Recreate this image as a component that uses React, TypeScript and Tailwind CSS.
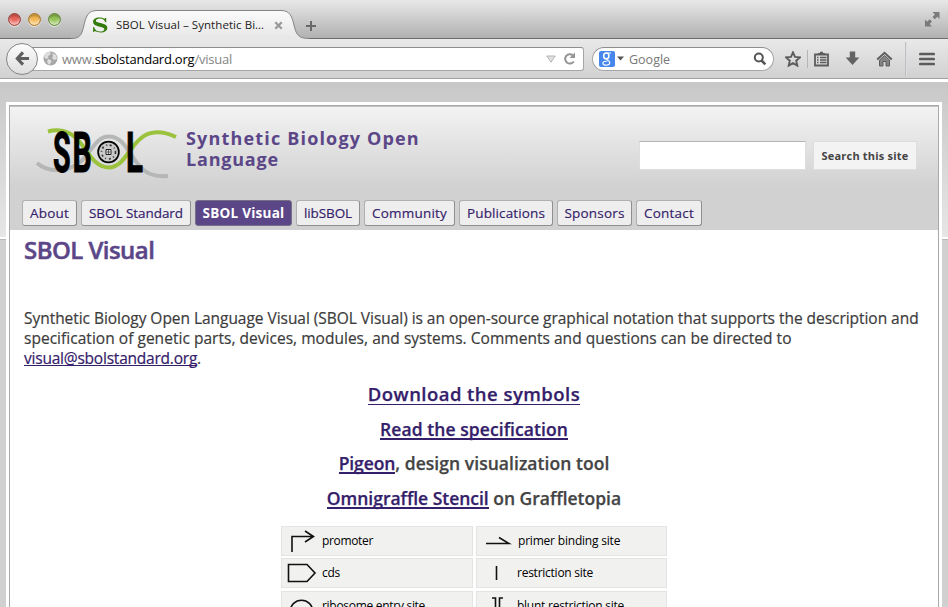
import type { ReactNode } from "react";

const nav = [
  { label: "About", cls: "w-[55px] tracking-[0.2px]" },
  { label: "SBOL Standard", cls: "w-[110px] tracking-[-0.05px]" },
  { label: "SBOL Visual", cls: "w-[97px] tracking-[0.26px]", active: true },
  { label: "libSBOL", cls: "w-[64px] tracking-[-0.1px]" },
  { label: "Community", cls: "w-[91px] tracking-[0.2px]" },
  { label: "Publications", cls: "w-[94px] tracking-[0.13px]" },
  { label: "Sponsors", cls: "w-[75px] tracking-[0.18px]" },
  { label: "Contact", cls: "w-[66px] tracking-[0.2px]" },
];

function Light({ className }: { className: string }) {
  return (
    <span className={`h-[13px] w-[13px] rounded-full border shadow-[inset_0_2px_2px_rgba(0,0,0,0.25),inset_0_-3px_3px_rgba(255,255,255,0.55),0_1px_0_rgba(255,255,255,0.6)] ${className}`} />
  );
}

function TabStrip() {
  return (
    <div className="relative flex h-[39px] items-start border-b border-[#6e6e6e] bg-linear-to-b from-[#e8e8e8] to-[#b1b1b1]">
      <div className="flex gap-[7px] pt-[13px] pl-[8px]">
        <Light className="border-[#99443f] bg-[#e85f57]" />
        <Light className="border-[#a8752c] bg-[#f3b64c]" />
        <Light className="border-[#67873f] bg-[#92c353]" />
      </div>
      <div className="relative ml-[10px] h-[39px] w-[238px]">
        <svg className="absolute inset-0" width="238" height="39" viewBox="0 0 238 39">
          <defs>
            <linearGradient id="tab" x1="0" y1="0" x2="0" y2="1">
              <stop offset="0" stopColor="#fbfbfb" />
              <stop offset="1" stopColor="#e7e7e7" />
            </linearGradient>
          </defs>
          <path d="M0 39V38.500C9 38.500 10.500 35 12.500 27C15 16 17 10.500 26 10.500H210C219 10.500 221 16 223.500 27C225.500 35 228 38.500 238 38.500V39Z" fill="url(#tab)" />
          <path d="M0 38.500C9 38.500 10.500 35 12.500 27C15 16 17 10.500 26 10.500H210C219 10.500 221 16 223.500 27C225.500 35 228 38.500 238 38.500" fill="none" stroke="#858585" />
        </svg>
        <div className="relative flex h-[39px] items-center pt-[11px] pl-[21px]">
          <svg width="16" height="16" viewBox="0 0 17 18">
            <path d="M15.500 1V6H14.500C13.700 3 11.500 1.600 8.500 1.600C5.500 1.600 3.800 2.600 3.800 4.300C3.800 7.500 16.800 6.200 16.800 12C16.800 15.500 13.500 17.300 9.500 17.300C6.800 17.300 4.500 16.700 2.600 15.800L1.700 17H.8V11.200H1.800C2.800 14.700 5.300 16.400 8.500 16.400C11.500 16.400 13.400 15.400 13.400 13.500C13.400 10 .7 11.500 .7 5.500C.7 2.500 3.500 .7 7.500 .7C10 .7 12 1.200 13.600 2L14.500 1Z" fill="#347a0a" />
          </svg>
          <span className="ml-[8px] w-[158px] text-[11.5px] leading-4 tracking-[0.06px] text-[#222]">SBOL Visual – Synthetic Bi…</span>
          <svg width="9" height="9" viewBox="0 0 9 9" className="mt-px">
            <path d="M1.300 1.300L7.700 7.700M7.700 1.300L1.300 7.700" stroke="#999" strokeWidth="2.300" />
          </svg>
        </div>
      </div>
      <svg className="mt-[20px] -ml-[4px]" width="12" height="12" viewBox="0 0 12 12">
        <path d="M6 1V11M1 6H11" stroke="#686868" strokeWidth="2" />
      </svg>
      <svg className="mt-[12px] mr-[8px] ml-auto" width="15" height="15" viewBox="0 0 15 15" fill="#7b7b7b">
        <path d="M7.500 0H14.500V7L12.300 4.800L9.800 7.300L7.500 5L9.900 2.500ZM7 14.500H0V7.500L2.200 9.700L4.700 7.200L7 9.500L4.600 12Z" />
      </svg>
    </div>
  );
}

function Toolbar() {
  return (
    <div className="flex h-10 items-center border-b border-[#a3a3a3] bg-linear-to-b from-[#e9e9e9] to-[#d1d1d1]">
      <div className="relative z-10 ml-[6px] flex h-8 w-8 shrink-0 items-center justify-center rounded-full border border-[#858585] bg-linear-to-b from-[#fcfcfc] to-[#dedede]">
        <svg width="15" height="15" viewBox="0 0 16 16">
          <path d="M8.500 1.500L2.500 8L8.500 14.500M3 8H15" fill="none" stroke="#5e5e5e" strokeWidth="3.300" />
        </svg>
      </div>
      <div className="-ml-[6px] flex h-6 w-[552px] shrink-0 items-center rounded-r-[3px] border border-l-0 border-[#a6a6a6] border-t-[#8e8e8e] bg-white">
        <svg className="ml-[11px]" width="15" height="15" viewBox="0 0 15 15">
          <circle cx="7.500" cy="7.500" r="7" fill="#a6a6a6" />
          <path d="M2 3L5 1L8 1.500L7 4L5 5L5.500 7L3 8L1 6ZM9 2L13 4L14 8L11 9L9 7L10 5ZM5 8L8 9L8.500 11L6 14L4 11Z" fill="#dedede" />
        </svg>
        <span className="ml-[4px] text-[13px] leading-5 tracking-[-0.23px] text-[#858585]">
          www.<span className="text-black">sbolstandard.org</span>/visual
        </span>
        <svg className="ml-auto" width="10" height="8" viewBox="0 0 10 8"><path d="M.8 1H9.200L5 7.200Z" fill="#e1e1e1" stroke="#b5b5b5" /></svg>
        <svg className="mr-[7px] ml-[7px]" width="13" height="13" viewBox="0 0 13 13">
          <path d="M10.800 9.500A4.700 4.700 0 1 1 9.700 3.100" fill="none" stroke="#949494" strokeWidth="2" />
          <path d="M12 .5V6H6.500Z" fill="#949494" />
        </svg>
      </div>
      <div className="ml-[8px] flex h-6 w-[182px] shrink-0 items-center rounded-full border border-[#a6a6a6] border-t-[#8e8e8e] bg-white">
        <span className="ml-[6px] flex h-4 w-4 items-center justify-center rounded-[2px] bg-[#4787ed] text-white">
          <svg width="12" height="14" viewBox="0 0 12 14" fill="none" stroke="currentColor">
            <ellipse cx="5.300" cy="3.900" rx="2.600" ry="2.900" strokeWidth="1.500" />
            <path d="M6 1H10M5.500 6.800C5 8 8.700 8.200 8.700 10.600C8.700 12.300 7 13.200 5 13.200C3.200 13.200 1.900 12.400 1.900 11.200C1.900 9.600 4 9 6.500 9" strokeWidth="1.200" />
          </svg>
        </span>
        <svg className="ml-[2px]" width="7" height="5" viewBox="0 0 7 5"><path d="M0 .5H7L3.500 4.500Z" fill="#555" /></svg>
        <span className="mt-[2px] ml-[5px] text-[12.5px] leading-5 text-[#777]">Google</span>
        <svg className="mr-[6px] ml-auto" width="14" height="14" viewBox="0 0 14 14">
          <circle cx="5.800" cy="5.500" r="4" fill="none" stroke="#555" strokeWidth="2" />
          <path d="M8.500 8.500L12.300 12.300" stroke="#555" strokeWidth="2.600" />
        </svg>
      </div>
      <svg className="ml-[11px] shrink-0" width="16" height="16" viewBox="0 0 16 16">
        <path d="M8 1.300L10 5.900L15 6.400L11.200 9.700L12.300 14.600L8 12.100L3.700 14.600L4.800 9.700L1 6.400L6 5.900Z" fill="none" stroke="#5c5c5c" strokeWidth="1.900" />
      </svg>
      <span className="ml-[6px] h-[18px] w-px bg-[#b5b5b5]" />
      <svg className="ml-[6px] shrink-0" width="15" height="16" viewBox="0 0 15 16">
        <path d="M1 3.500H14V14.500H1Z" fill="none" stroke="#5c5c5c" strokeWidth="1.800" />
        <path d="M4 4V2H6V.8H9V2H11V4Z" fill="#5c5c5c" />
        <path d="M3 6.500H4.500M6 6.500H12.500M3 9H4.500M6 9H12.500M3 11.500H4.500M6 11.500H12.500" stroke="#5c5c5c" strokeWidth="1.300" />
      </svg>
      <svg className="ml-[16px] shrink-0" width="15" height="15" viewBox="0 0 15 15">
        <path d="M4.800 .5H10.200V6.500H14.300L7.500 14L.7 6.500H4.800Z" fill="#636363" />
      </svg>
      <svg className="ml-[16px] shrink-0" width="17" height="16" viewBox="0 0 17 16">
        <path d="M1.200 8.500L8.500 1.700L15.800 8.500" fill="none" stroke="#5c5c5c" strokeWidth="1.900" />
        <path d="M3.500 9L8.500 4.500L13.500 9V15H10V10.500H7V15H3.500Z" fill="#858585" stroke="#5c5c5c" />
      </svg>
      <span className="ml-[12px] h-[34px] w-[2px] bg-linear-to-r from-[#aeb0b6] to-[#eeeeee]" />
      <svg className="ml-[12px] shrink-0" width="16" height="14" viewBox="0 0 16 14">
        <path d="M1.300 2H14.700M1.300 7H14.700M1.300 12H14.700" stroke="#5c5c5c" strokeWidth="2.700" strokeLinecap="round" />
      </svg>
    </div>
  );
}

function Logo() {
  return (
    <svg className="shrink-0 overflow-visible" width="142" height="54" viewBox="0 0 142 54">
      <g fill="none" strokeWidth="4">
        <path d="M1 37C12 47 31 46 43 37C56 27 59 10.500 73 10.500C87 10.500 92 26 101 37C109 48 118 51 132 50" stroke="#b5b7b7" />
        <path d="M12 5.500C21 3 33 4 42 14C52 25 58 41.500 73 41.500C87 41.500 94 21 104 13C115 3 129 6 140 11" stroke="#9bc23c" />
      </g>
      <g fontFamily="Roboto, sans-serif" fontWeight="700" fontSize="55" fill="#000" stroke="#000" strokeWidth="1">
        <text transform="translate(17 45.500) scale(.52 1)">S</text>
        <text transform="translate(36.500 45.500) scale(.55 1)">B</text>
        <text transform="translate(90 45.500) scale(.57 1)">L</text>
      </g>
      <circle cx="72.500" cy="26" r="10.400" fill="#c9c9c9" stroke="#000" strokeWidth="1.700" />
      <circle cx="72.500" cy="26" r="7" fill="none" stroke="#333" strokeWidth="1.600" strokeDasharray="2 3 1 2.500" />
      <path d="M70 23.500H75V28.500H70Z" fill="#ddd" stroke="#222" />
      <path d="M72.500 24V28M71 26H74" stroke="#333" strokeWidth=".7" />
    </svg>
  );
}

function Header() {
  return (
    <header className="flex h-[124px] flex-col border-t border-[#c2c2c2] bg-linear-to-b from-[#f3f3f3] to-[#d1d1d1] to-[65%]">
      <div className="flex h-[93px] items-start pl-[26px]">
        <div className="mt-[19px]"><Logo /></div>
        <h2 className="mt-[21px] ml-[8px] w-[250px] text-[18px] leading-[21px] font-bold text-[#5b4688]">
          <span className="block h-[21px] tracking-[1.17px]">Synthetic Biology Open</span>
          <span className="block h-[21px] tracking-[0.8px]">Language</span>
        </h2>
        <div className="mt-[34px] mr-[21px] ml-auto flex gap-[7px]">
          <div className="h-[29px] w-[167px] border border-[#ddd] border-t-[#b6b6b6] bg-white" />
          <button className="h-[29px] w-[104px] border border-[#ddd] bg-[#f3f3f3] pt-px text-[11px] font-bold tracking-[0.2px] text-[#444]">Search this site</button>
        </div>
      </div>
      <nav className="flex gap-[4px] pl-[12px]">
        {nav.map((n) => (
          <a key={n.label} className={`flex h-[26px] items-center justify-center rounded-[3px] border text-[13.5px] whitespace-nowrap ${n.cls} ${n.active ? "border-[#777086] bg-[#5b4688] font-bold text-white" : "border-[#b0b0b0] border-r-[#8f8f8f] border-b-[#8f8f8f] bg-[#eee] text-[#34206a] [-webkit-text-stroke:0.15px]"}`}>
            {n.label}
          </a>
        ))}
      </nav>
    </header>
  );
}

function Link({ children, className = "" }: { children: ReactNode; className?: string }) {
  return <a className={`inline-block h-[21px] border-[#34206a] leading-[20px] text-[#34206a] ${className}`}>{children}</a>;
}

function Cell({ icon, label, className, box = "h-[30px]" }: { icon: ReactNode; label: string; className: string; box?: string }) {
  return (
    <div className={`flex items-center border border-[#e4e4e2] bg-[#f1f1f0] text-[12px] text-black ${box}`}>
      <svg className="shrink-0" width="40" height="28" viewBox="0 0 40 28" fill="none" stroke="#111" strokeWidth="1.600">{icon}</svg>
      <span className={`whitespace-nowrap ${className}`}>{label}</span>
    </div>
  );
}

function Symbols() {
  return (
    <div className="mt-[11px] ml-[271px] grid w-[386px] grid-cols-[192px_191px] gap-x-[3px] gap-y-[2px]">
      <Cell label="promoter" className="tracking-[-0.34px]" icon={<path d="M10 25V9.500H31M23 4L31.500 9.500L23 15" />} />
      <Cell label="primer binding site" className="ml-px tracking-[-0.2px]" icon={<path d="M9 16.500H32L22 10.500" />} />
      <Cell label="cds" className="tracking-[-0.3px]" icon={<path d="M6.500 5.500H25L33 14L25 22.500H6.500Z" />} />
      <Cell label="restriction site" className="tracking-[-0.25px]" icon={<path d="M19.500 7V21" />} />
      <Cell label="ribosome entry site" box="mt-px h-[30px]" className="tracking-[-0.29px]" icon={<path d="M8 21C8 4 31 4 31 21Z" />} />
      <Cell label="blunt restriction site" box="mt-px h-[30px]" className="tracking-[-0.25px]" icon={<path d="M15 6H18.500V22H15M26 6H22.500V22H26" />} />
    </div>
  );
}

export default function App() {
  return (
    <div className="flex h-[607px] w-[948px] flex-col overflow-hidden bg-white font-['Open_Sans',sans-serif]">
      <TabStrip />
      <Toolbar />
      <div className="mt-[3px] flex min-h-0 flex-1 flex-col bg-[linear-gradient(to_bottom,#c8c8c8_0px,#e6e6e6_155px,#fff_155px,#fff_157px,#b8b8b8_157px,#b8b8b8_158px,#d0d0d0_158px)] px-[6px] pt-[20px]">
        <div className="min-h-0 flex-1 bg-white px-[3px] pt-[3px]">
          <div className="h-full border border-b-0 border-[#aaa]">
            <Header />
            <main className="text-[#444]">
              <h1 className="h-[40px] pl-[14px] text-[24px] leading-[40px] font-semibold tracking-[-0.55px] text-[#5b4688] [-webkit-text-stroke:0.5px]">SBOL Visual</h1>
              <p className="mt-[38px] pl-[14px] text-[15.5px] leading-[20px] whitespace-nowrap text-[#3c3c3c] [-webkit-text-stroke:0.2px]">
                <span className="block tracking-[-0.04px]">Synthetic Biology Open Language Visual (SBOL Visual) is an open-source graphical notation that supports the description and</span>
                <span className="block tracking-[0.03px]">specification of genetic parts, devices, modules, and systems. Comments and questions can be directed to</span>
                <span className="block tracking-[-0.22px]"><a className="inline-block h-[18px] border-b border-[#34206a] leading-[20px] text-[#34206a]">visual@sbolstandard.org</a>.</span>
              </p>
              <div className="mt-[9px] text-center text-[17.5px] leading-[34.600px] font-semibold whitespace-pre [-webkit-text-stroke:0.25px]">
                <p><Link className="border-b text-[18.5px] tracking-[0.45px]">Download the symbols</Link></p>
                <p><Link className="border-b-2 tracking-[0.08px]">Read the specification</Link></p>
                <p className="tracking-[0.05px]"><Link className="border-b-2 tracking-[-0.1px]">Pigeon</Link>, design visualization tool</p>
                <p className="tracking-[0px]"><Link className="border-b-2 tracking-[-0.02px]">Omnigraffle Stencil</Link> on Graffletopia</p>
              </div>
              <Symbols />
            </main>
          </div>
        </div>
      </div>
    </div>
  );
}
